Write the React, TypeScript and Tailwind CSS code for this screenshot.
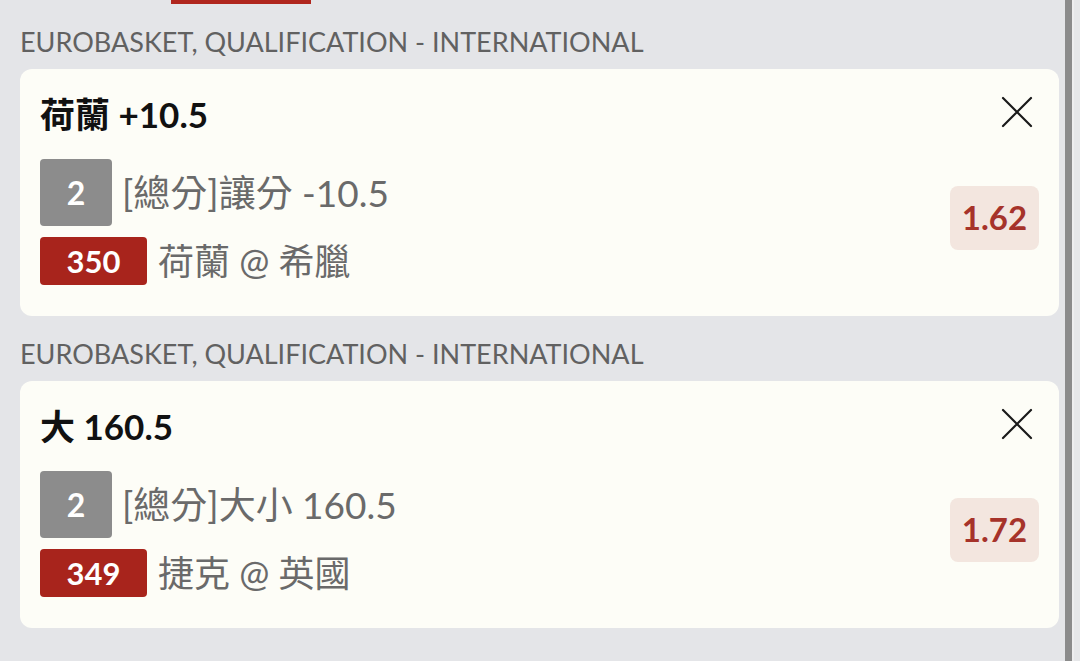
interface Bet {
  id: number;
  league: string;
  pick: string;
  count: number;
  market: string;
  code: number;
  match: string;
  odds: string;
}

const bets: Bet[] = [
  {
    id: 1,
    league: 'EUROBASKET, QUALIFICATION - INTERNATIONAL',
    pick: '荷蘭 +10.5',
    count: 2,
    market: '[總分]讓分 -10.5',
    code: 350,
    match: '荷蘭 @ 希臘',
    odds: '1.62',
  },
  {
    id: 2,
    league: 'EUROBASKET, QUALIFICATION - INTERNATIONAL',
    pick: '大 160.5',
    count: 2,
    market: '[總分]大小 160.5',
    code: 349,
    match: '捷克 @ 英國',
    odds: '1.72',
  },
];

const font = "font-['Lato','Noto_Sans_CJK_TC',sans-serif]";

function CloseIcon() {
  return (
    <svg className="w-[32px] h-[32px]" viewBox="0 0 32 32" fill="none" stroke="#1a1a1a" strokeWidth={2.2} strokeLinecap="round">
      <path d="M2 2L30 30M30 2L2 30" />
    </svg>
  );
}

function BetCard({ bet }: { bet: Bet }) {
  return (
    <div>
      {/* League header */}
      <div className="h-[65px] flex items-end pb-[12px] leading-[30px] text-[27px] text-[#616161]">
        {bet.league}
      </div>

      {/* Card */}
      <div className="h-[247px] rounded-[12px] bg-[#fdfdf7] px-[20px] flex flex-col">
        <div className="flex items-start justify-between pt-[24px]">
          <h3 className="text-[35px] font-bold text-[#111] leading-[42px]">{bet.pick}</h3>
          <div className="mt-[3px] mr-[6px]">
            <CloseIcon />
          </div>
        </div>

        <div className="flex items-center justify-between mt-[24px]">
          <div className="flex flex-col gap-[11px]">
            <div className="flex items-center gap-[10px]">
              <span className="w-[72px] h-[67px] rounded-[4px] bg-[#8c8c8c] text-white text-[32px] leading-none font-bold flex items-center justify-center">
                {bet.count}
              </span>
              <span className="text-[37px] leading-[44px] text-[#6a6a6a]">{bet.market}</span>
            </div>
            <div className="flex items-center gap-[11px]">
              <span className="w-[107px] h-[48px] rounded-[4px] bg-[#a8241c] text-white text-[31px] leading-none font-bold flex items-center justify-center">
                {bet.code}
              </span>
              <span className="text-[36px] leading-[44px] text-[#6a6a6a]">{bet.match}</span>
            </div>
          </div>

          <span className="w-[89px] h-[64px] rounded-[8px] bg-[#f3e6df] text-[#a6332a] text-[33px] font-bold flex items-center justify-center mb-[9px]">
            {bet.odds}
          </span>
        </div>
      </div>
    </div>
  );
}

export default function App() {
  return (
    <div className={`w-[1080px] h-[661px] overflow-hidden bg-[#e4e5e8] flex ${font}`}>
      <div className="flex-1 pl-[20px] pr-[6px] pt-[4px] relative">
        {/* active tab indicator */}
        <div className="absolute left-[171px] top-0 w-[140px] h-[4px] bg-[#b0261e]" />
        {bets.map(bet => (
          <BetCard key={bet.id} bet={bet} />
        ))}
      </div>
      {/* scrollbar */}
      <div className="w-[7px] h-full bg-[#8b8b8b]" />
      <div className="w-[8px] h-full bg-[#e6e7e9] border-l-2 border-[#eeeeef]" />
    </div>
  );
}
